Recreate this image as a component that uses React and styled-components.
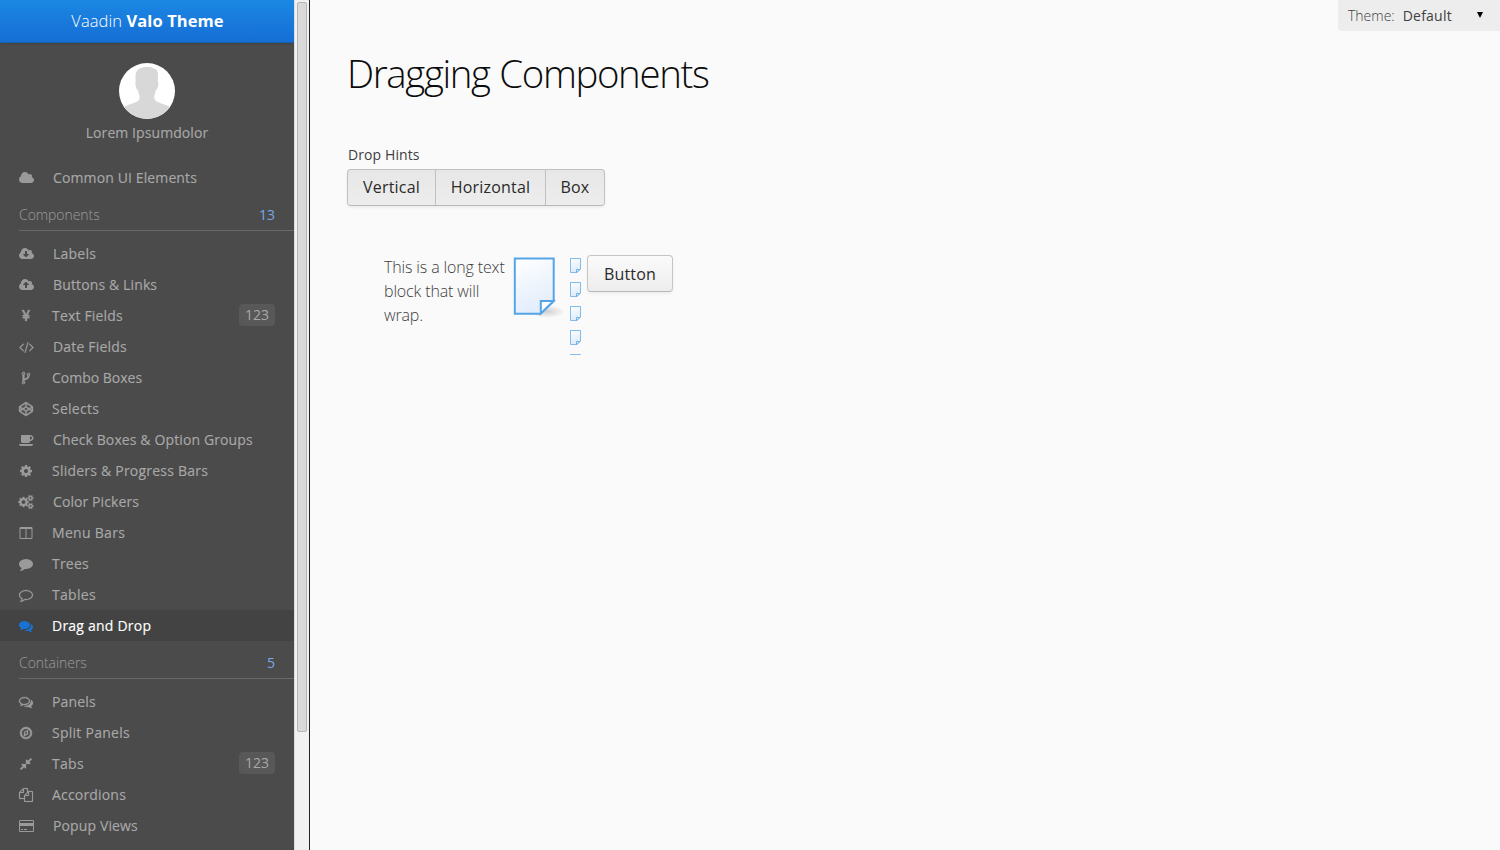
import React from 'react';
import styled, { createGlobalStyle } from 'styled-components';
import { FaCodepen } from 'react-icons/fa';

const GlobalStyle = createGlobalStyle`
  * { box-sizing: border-box; }
  html, body, #root { height: 100%; }
  body {
    margin: 0;
    overflow: hidden;
    background: #fafafa;
    color: #404040;
    font: 400 16px/1.55 "Open Sans", sans-serif;
  }
`;

const cloudBody =
  'm640 224q0 159-112.5 271.5t-271.5 112.5h-1088q-185 0-316.5-131.5t-131.5-316.5q0-130 70-240t188-165q-2-30-2-43 0-212 150-362t362-150q156 0 285.5 87t188.5 231q71-62 166-62 106 0 181 75t75 181q0 76-41 138 130 31 213.5 135.5t83.5 238.5z';
const bubble =
  'q0 174-120 321.5t-326 233-450 85.5q-70 0-145-8-198 175-460 242-49 14-114 22-17 2-30.5-9t-17.5-29v-1q-3-4-.5-12t2-10 4.5-9.5l6-9 7-8.5 8-9q7-8 31-34.5t34.5-38 31-39.5 32.5-51 27-59 26-76q-157-89-247.5-220t-90.5-281q0-130 71-248.5t191-204.5 286-136.5 348-50.5q244 0 450 85.5t326 233 120 321.5z';
const smallGear =
  'v140q0 16-149 31-12 27-30 52 51 113 51 138 0 4-4 7-122 71-124 71-8 0-46-47t-52-68q-20 2-30 2t-30-2q-14 21-52 68t-46 47q-2 0-124-71-4-3-4-7 0-25 51-138-18-25-30-52-149-15-149-31v-140q0-16 149-31 13-29 30-52-51-113-51-138 0-4 4-7 4-2 35-20t59-34 30-16q8 0 46 46.5t52 67.5q20-2 30-2t30 2q51-71 92-112l6-2q4 0 124 70 4 3 4 7 0 25-51 138 17 23 30 52 149 15 149 31z';
const backBubble =
  'q10 24 20.5 44t25 38.5 22.5 29 26 29.5 23 25q1 1 4 4.5t4.5 5 4 5 3.5 5.5l2.5 5 2 6 .5 6.5-1 6.5q-3 14-13 22t-22 7q-50-7-86-16-154-40-278-128-90 16-176 16-271 0-472-132 58 4 88 4 161 0 309-45t264-129q125-92 192-212t67-254q0-77-23-152 129 71 204 178t75 230q0 120-71 224.5t-195 176.5z';
const frontBubble =
  'q0 139-94 257t-256.5 186.5-353.5 68.5q-86 0-176-16-124 88-278 128-36 9-86 16h-3q-11 0-20.5-8t-11.5-21q-1-3-1-6.5t.5-6.5 2-6l2.5-5 3.5-5.5 4-5 4.5-5 4-4.5q5-6 23-25t26-29.5 22.5-29 25-38.5 20.5-44q-124-72-195-177t-71-224q0-139 94-257t256.5-186.5 353.5-68.5 353.5 68.5 256.5 186.5 94 257z';

/* w is the width in px, where 128 path units make one px; x is the left edge of
   the drawing; bold thickens the outline of thin glyphs. */
const glyphs = {
  cloud: { w: 15, x: 64, d: 'M1984 1152q0 159-112.5 271.5t-271.5 112.5h-1088q-185 0-316.5-131.5t-131.5-316.5q0-132 71-241.5t187-163.5q-2-28-2-43 0-212 150-362t362-150q158 0 286.5 88t187.5 230q70-62 166-62 106 0 181 75t75 181q0 75-41 138 129 30 213 134.5t84 239.5z' },
  download: { w: 15, x: 64, d: 'M1344 928q0-14-9-23t-23-9h-224v-352q0-13-9.5-22.5t-22.5-9.5h-192q-13 0-22.5 9.5t-9.5 22.5v352h-224q-13 0-22.5 9.5t-9.5 22.5q0 14 9 23l352 352q9 9 23 9t23-9l351-351q10-12 10-24z' + cloudBody },
  upload: { w: 15, x: 64, d: 'M1344 864q0-14-9-23l-352-352q-9-9-23-9t-23 9l-351 351q-10 12-10 24 0 14 9 23t23 9h224v352q0 13 9.5 22.5t22.5 9.5h192q13 0 22.5-9.5t9.5-22.5v-352h224q13 0 22.5-9.5t9.5-22.5zm0 64' + cloudBody },
  yen: { w: 14, x: 0, bold: 50, d: 'M985.5 1536h-172q-13 0-22.5-9t-9.5-23v-330h-288q-13 0-22.5-9t-9.5-23v-103q0-13 9.5-22.5t22.5-9.5h288v-85h-288q-13 0-22.5-9t-9.5-23v-104q0-13 9.5-22.5t22.5-9.5h214l-321-578q-8-16 0-32 10-16 28-16h194q19 0 29 18l215 425q19 38 56 125 10-24 30.5-68t27.5-61l191-420q8-19 29-19h191q17 0 27 16 9 14 1 31l-313 579h215q13 0 22.5 9.5t9.5 22.5v104q0 14-9.5 23t-22.5 9h-290v85h290q13 0 22.5 9.5t9.5 22.5v103q0 14-9.5 23t-22.5 9h-290v330q0 13-9.5 22.5t-22.5 9.5z' },
  code: { w: 15, x: 64, bold: 30, d: 'M681 1399l-50 50q-10 10-23 10t-23-10l-466-466q-10-10-10-23t10-23l466-466q10-10 23-10t23 10l50 50q10 10 10 23t-10 23l-393 393 393 393q10 10 10 23t-10 23zm591-1067l-373 1291q-4 13-15.5 19.5t-23.5 2.5l-62-17q-13-4-19.5-15.5t-2.5-24.5l373-1291q4-13 15.5-19.5t23.5-2.5l62 17q13 4 19.5 15.5t2.5 24.5zm657 651l-466 466q-10 10-23 10t-23-10l-50-50q-10-10-10-23t10-23l393-393-393-393q-10-10-10-23t10-23l50-50q10-10 23-10t23 10l466 466q10 10 10 23t-10 23z' },
  fork: { w: 14, x: 0, bold: 70, d: 'M672 1472q0-40-28-68t-68-28-68 28-28 68 28 68 68 28 68-28 28-68zm0-1152q0-40-28-68t-68-28-68 28-28 68 28 68 68 28 68-28 28-68zm640 128q0-40-28-68t-68-28-68 28-28 68 28 68 68 28 68-28 28-68zm96 0q0 52-26 96.5t-70 69.5q-2 287-226 414-67 38-203 81-128 40-169.5 71t-41.5 100v26q44 25 70 69.5t26 96.5q0 80-56 136t-136 56-136-56-56-136q0-52 26-96.5t70-69.5v-820q-44-25-70-69.5t-26-96.5q0-80 56-136t136-56 136 56 56 136q0 52-26 96.5t-70 69.5v497q54-26 154-57 55-17 87.5-29.5t70.5-31 59-39.5 40.5-51 28-69.5 8.5-91.5q-44-25-70-69.5t-26-96.5q0-80 56-136t136-56 136 56 56 136z' },
  coffee: { w: 15, x: 0, d: 'M1664 640q0-80-56-136t-136-56h-64v384h64q80 0 136-56t56-136zm-1664 768h1792q0 106-75 181t-181 75h-1280q-106 0-181-75t-75-181zm1856-768q0 159-112.5 271.5t-271.5 112.5h-64v32q0 92-66 158t-158 66h-704q-92 0-158-66t-66-158v-736q0-26 19-45t45-19h1152q159 0 271.5 112.5t112.5 271.5z' },
  cog: { w: 14, x: 0, d: 'M1152 896q0-106-75-181t-181-75-181 75-75 181 75 181 181 75 181-75 75-181zm512-109v222q0 12-8 23t-20 13l-185 28q-19 54-39 91 35 50 107 138 10 12 10 25t-9 23q-27 37-99 108t-94 71q-12 0-26-9l-138-108q-44 23-91 38-16 136-29 186-7 28-36 28h-222q-14 0-24.5-8.5t-11.5-21.5l-28-184q-49-16-90-37l-141 107q-10 9-25 9-14 0-25-11-126-114-165-168-7-10-7-23 0-12 8-23 15-21 51-66.5t54-70.5q-27-50-41-99l-183-27q-13-2-21-12.5t-8-23.5v-222q0-12 8-23t19-13l186-28q14-46 39-92-40-57-107-138-10-12-10-24 0-10 9-23 26-36 98.5-107.5t94.5-71.5q13 0 26 10l138 107q44-23 91-38 16-136 29-186 7-28 36-28h222q14 0 24.5 8.5t11.5 21.5l28 184q49 16 90 37l142-107q9-9 24-9 13 0 25 10 129 119 165 170 7 8 7 22 0 12-8 23-15 21-51 66.5t-54 70.5q26 50 41 98l183 28q13 2 21 12.5t8 23.5z' },
  cogs: { w: 15, x: 0, bold: 40, d: 'M832 896q0-106-75-181t-181-75-181 75-75 181 75 181 181 75 181-75 75-181zm768 512q0-52-38-90t-90-38-90 38-38 90q0 53 37.5 90.5t90.5 37.5 90.5-37.5 37.5-90.5zm0-1024q0-52-38-90t-90-38-90 38-38 90q0 53 37.5 90.5t90.5 37.5 90.5-37.5 37.5-90.5zm-384 421v185q0 10-7 19.5t-16 10.5l-155 24q-11 35-32 76 34 48 90 115 7 11 7 20 0 12-7 19-23 30-82.5 89.5t-78.5 59.5q-11 0-21-7l-115-90q-37 19-77 31-11 108-23 155-7 24-30 24h-186q-11 0-20-7.5t-10-17.5l-23-153q-34-10-75-31l-118 89q-7 7-20 7-11 0-21-8-144-133-144-160 0-9 7-19 10-14 41-53t47-61q-23-44-35-82l-152-24q-10-1-17-9.5t-7-19.5v-185q0-10 7-19.5t16-10.5l155-24q11-35 32-76-34-48-90-115-7-11-7-20 0-12 7-20 22-30 82-89t79-59q11 0 21 7l115 90q34-18 77-32 11-108 23-154 7-24 30-24h186q11 0 20 7.5t10 17.5l23 153q34 10 75 31l118-89q8-7 20-7 11 0 21 8 144 133 144 160 0 8-7 19-12 16-42 54t-45 60q23 48 34 82l152 23q10 2 17 10.5t7 19.5zm640 533' + smallGear + 'm0-1024' + smallGear },
  columns: { w: 14, x: 0, d: 'M224 1536h608v-1152h-640v1120q0 13 9.5 22.5t22.5 9.5zm1376-32v-1120h-640v1152h608q13 0 22.5-9.5t9.5-22.5zm128-1216v1216q0 66-47 113t-113 47h-1344q-66 0-113-47t-47-113v-1216q0-66 47-113t113-47h1344q66 0 113 47t47 113z' },
  comment: { w: 14, x: 0, d: 'M1792 896' + bubble },
  commentOutline: { w: 14, x: 0, bold: 30, d: 'M896 384q-204 0-381.5 69.5t-282 187.5-104.5 255q0 112 71.5 213.5t201.5 175.5l87 50-27 96q-24 91-70 172 152-63 275-171l43-38 57 6q69 8 130 8 204 0 381.5-69.5t282-187.5 104.5-255-104.5-255-282-187.5-381.5-69.5zm896 512' + bubble },
  comments: { w: 14, x: 0, d: 'M1408 768' + frontBubble + 'M1526 1425' + backBubble },
  commentsOutline: { w: 14, x: 0, bold: 40, d: 'M704 384q-153 0-286 52t-211.5 141-78.5 191q0 82 53 158t149 132l97 56-35 84q34-20 62-39l44-31 53 10q78 14 153 14 153 0 286-52t211.5-141 78.5-191-78.5-191-211.5-141-286-52zM1408 768' + frontBubble + 'M1526 1425' + backBubble },
  compass: { w: 14, x: 0, bold: 50, d: 'M768 1103l256-128v-311l-256 128v311zm384-591v542l-512 256v-542zm288 384q0-148-73-273t-198-198-273-73-273 73-198 198-73 273 73 273 198 198 273 73 273-73 198-198 73-273zm224 0q0 209-103 385.5t-279.5 279.5-385.5 103-385.5-103-279.5-279.5-103-385.5 103-385.5 279.5-279.5 385.5-103 385.5 103 279.5 279.5 103 385.5z' },
  compress: { w: 14, x: 0, bold: 30, d: 'M896 960v448q0 26-19 45t-45 19-45-19l-144-144-332 332q-10 10-23 10t-23-10l-114-114q-10-10-10-23t10-23l332-332-144-144q-19-19-19-45t19-45 45-19h448q26 0 45 19t19 45zm755-672q0 13-10 23l-332 332 144 144q19 19 19 45t-19 45-45 19h-448q-26 0-45-19t-19-45v-448q0-26 19-45t45-19 45 19l144 144 332-332q10-10 23-10t23 10l114 114q10 10 10 23z' },
  copy: { w: 14, x: 0, bold: 20, d: 'M1696 384q40 0 68 28t28 68v1216q0 40-28 68t-68 28h-960q-40 0-68-28t-28-68v-288h-544q-40 0-68-28t-28-68v-672q0-40 20-88t48-76l408-408q28-28 76-48t88-20h416q40 0 68 28t28 68v328q68-40 128-40h416zm-544 213l-299 299h299v-299zm-640-384l-299 299h299v-299zm196 647l316-316v-416h-384v416q0 40-28 68t-68 28h-416v640h512v-256q0-40 20-88t48-76zm956 804v-1152h-384v416q0 40-28 68t-68 28h-416v640h896z' },
  card: { w: 15, x: 0, d: 'M1760 128q66 0 113 47t47 113v1216q0 66-47 113t-113 47h-1600q-66 0-113-47t-47-113v-1216q0-66 47-113t113-47h1600zm-1600 128q-13 0-22.5 9.5t-9.5 22.5v224h1664v-224q0-13-9.5-22.5t-22.5-9.5h-1600zm1600 1280q13 0 22.5-9.5t9.5-22.5v-608h-1664v608q0 13 9.5 22.5t22.5 9.5h1600zm-1504-128v-128h256v128h-256zm384 0v-128h384v128h-384z' },
};

const Page = styled.div`
  display: flex;
  height: 850px;
  width: 1500px;
`;

const Sidebar = styled.aside`
  display: flex;
  width: 310px;
  height: 100%;
  border-right: 1px solid #232323;
  flex: none;
`;

const MenuColumn = styled.div`
  width: 294px;
  background: #4b4b4b;
  overflow: hidden;
`;

const ScrollTrack = styled.div`
  width: 15px;
  padding: 2px 2px 0 2px;
  background: #f1f1f1;
  border-left: 1px solid #dcdcdc;
`;

const ScrollThumb = styled.div`
  height: 730px;
  width: 10px;
  background: #d9d9d9;
  border: 1px solid #b5b5b5;
  border-radius: 2px;
`;

const Brand = styled.header`
  height: 43px;
  background: linear-gradient(#1b87e3 2%, #166ed5 98%);
  border-bottom: 1px solid #1862b4;
  box-shadow: 0 1px 2px rgba(0, 0, 0, 0.12);
  color: #fff;
  font-size: 16.5px;
  line-height: 41px;
  padding-left: 1px;
  letter-spacing: 0.08px;
  text-align: center;
  font-weight: 300;

  b { font-weight: 700; }
`;

const Profile = styled.div`
  display: flex;
  flex-direction: column;
  align-items: center;
  padding-top: 20px;
  height: 119px;
  color: #a8a8a8;
  font-size: 14px;
  line-height: 27px;
  letter-spacing: 0.08px;
  -webkit-text-stroke: 0.15px currentColor;
`;

const Section = styled.div`
  display: flex;
  justify-content: space-between;
  margin: 6px 0 7px 19px;
  padding-right: 19px;
  height: 32px;
  border-bottom: 1px solid #696969;
  color: #9c9c9c;
  font-weight: 300;
  font-size: 14px;
  line-height: 31px;
  letter-spacing: -0.06px;
`;

const Count = styled.span`
  color: #75aae6;
  font-weight: 400;
`;

const Item = styled.div`
  display: flex;
  align-items: center;
  height: 31px;
  padding: 0 19px;
  font-size: 14px;
  color: ${(p) => (p.$selected ? '#fff' : '#a8a8a8')};
  background: ${(p) => (p.$selected ? '#434343' : 'transparent')};

  svg {
    flex: none;
    margin-right: 19px;
    overflow: visible;
    color: ${(p) => (p.$selected ? '#1a72d2' : '#9a9a9a')};
  }
`;

const ItemLabel = styled.span`
  flex: 1;
  white-space: nowrap;
  letter-spacing: ${(p) => p.$tracking}px;
  -webkit-text-stroke: 0.15px currentColor;
`;

const Badge = styled.span`
  height: 22px;
  padding: 0 6px;
  border-radius: 4px;
  background: #585858;
  line-height: 21px;
  margin-top: -2px;
`;

const Main = styled.main`
  flex: 1;
  padding-left: 37px;
`;

const TopBar = styled.div`
  display: flex;
  justify-content: flex-end;
  height: 31px;
`;

const ThemePicker = styled.div`
  display: flex;
  align-items: center;
  width: 162px;
  padding: 0 15px 0 10px;
  border-radius: 0 0 0 4px;
  background: #ededed;
  font-size: 14px;
  font-weight: 300;
`;

const ThemeValue = styled.span`
  flex: 1;
  margin-left: 8px;
  font-weight: 400;
  letter-spacing: 0.22px;
`;

const Title = styled.h1`
  margin: 16px 0 0;
  color: #0c0c0c;
  font-size: 38.4px;
  font-weight: 300;
  letter-spacing: -1.36px;
  word-spacing: 1px;
  line-height: 52px;
`;

const Caption = styled.div`
  margin: 45px 0 0 1px;
  font-size: 14px;
  line-height: 22px;
  letter-spacing: 0.1px;
`;

const ButtonGroup = styled.div`
  display: inline-flex;
  height: 37px;
  margin-top: 3px;
  border: 1px solid #c0c0c0;
  border-bottom-color: #b8b8b8;
  border-radius: 4px;
  background: linear-gradient(#e7e7e7, #ededed);
  box-shadow: 0 2px 3px rgba(0, 0, 0, 0.05);
`;

const GroupButton = styled.button`
  width: ${(p) => p.$width}px;
  padding: 0 0 1px;
  border: 0;
  border-left: ${(p) => (p.$first ? '0' : '1px solid #c0c0c0')};
  background: none;
  color: #2a2a2a;
  font: 400 16px/34px "Open Sans", sans-serif;
  letter-spacing: 0.18px;
`;

const DragArea = styled.section`
  display: flex;
  align-items: flex-start;
  height: 100px;
  margin: 49px 0 0 37px;
  overflow: hidden;
`;

const LongText = styled.p`
  width: 127px;
  margin: 0;
  font-weight: 300;
  line-height: 24px;
  letter-spacing: -0.14px;
`;

const BigFile = styled.div`
  width: 56px;
  height: 68px;
  svg { display: block; }
`;

const FileList = styled.div`
  display: flex;
  flex-direction: column;
  width: 20px;
  height: 100px;
  overflow: hidden;
  svg { flex: none; display: block; }
`;

const PushButton = styled.button`
  width: 86px;
  height: 37px;
  padding: 1px 0 0;
  border: 1px solid #c5c5c5;
  border-bottom-color: #b8b8b8;
  border-radius: 4px;
  background: linear-gradient(#fafafa, #ededed);
  box-shadow: 0 2px 3px rgba(0, 0, 0, 0.05);
  color: #2a2a2a;
  font: 400 16px/34px "Open Sans", sans-serif;
  letter-spacing: 0.18px;
`;

function Glyph({ name }) {
  if (name === 'codepen') return <FaCodepen size={14} stroke="currentColor" strokeWidth={16} />;
  const { w, x, d, bold = 0 } = glyphs[name];
  return (
    <svg width={w} height={14} viewBox={`${x} 0 ${w * 128} 1792`} fill="currentColor">
      <path d={d} stroke="currentColor" strokeWidth={bold} />
    </svg>
  );
}

function Avatar() {
  return (
    <svg width="56" height="56" viewBox="0 0 56 56">
      <defs>
        <clipPath id="avatarClip"><circle cx="28" cy="28" r="28" /></clipPath>
      </defs>
      <circle cx="28" cy="28" r="28" fill="#fff" />
      <path
        clipPath="url(#avatarClip)"
        fill="#d8d8d8"
        d="M28 4c4 0 5.500.5 6.800 1.600C38 6.300 39.300 9 39 13c-.1 2-.2 4-.1 5.500 1 .6.4 4.500-.4 6.500-.5 1.500-1.200 2-1.700 2.200-.3 2.500-.9 4.300-1.600 5.500 0 2.600.5 4.600 2.500 5.800 3.500 2 8.600 2.800 13.200 5.300V58H5V43.800c4.600-2.500 9.700-3.300 13.300-5.300 2-1.200 2.500-3.300 2.300-5.800-.9-1.300-1.300-3.500-1.600-5.500-1-.4-1.600-1.500-2-3-.5-2-1-5-.3-6-.2-2-.3-4-.1-6C17 6.500 21.500 4 28 4z"
      />
    </svg>
  );
}

function BigFileIcon() {
  return (
    <svg width="56" height="68" viewBox="0 0 56 68">
      <defs>
        <linearGradient id="sheet" x1="0" y1="0" x2="0.3" y2="1">
          <stop offset="0" stopColor="#fff" />
          <stop offset="1" stopColor="#e3edfb" />
        </linearGradient>
        <radialGradient id="shade">
          <stop offset="0" stopColor="#000" stopOpacity="0.17" />
          <stop offset="1" stopColor="#000" stopOpacity="0" />
        </radialGradient>
      </defs>
      <ellipse cx="36" cy="56.5" rx="18" ry="6.5" fill="url(#shade)" />
      <path d="M3.8 3.5H42.7V46L29.5 58.7H3.8z" fill="url(#sheet)" stroke="#55a5e6" strokeWidth="2" />
      <path d="M29.8 58.5V46H42.5z" fill="#fff" stroke="#55a5e6" strokeWidth="2" />
    </svg>
  );
}

function SmallFileIcon() {
  return (
    <svg width="16" height="24" viewBox="0 0 16 24">
      <defs>
        <linearGradient id="smallSheet" x1="0" y1="0" x2="0.3" y2="1">
          <stop offset="0" stopColor="#fff" />
          <stop offset="1" stopColor="#dfeafa" />
        </linearGradient>
      </defs>
      <path d="M3.5 3.5H13.5V14L9.8 17.5H3.5z" fill="url(#smallSheet)" stroke="#83bbea" />
      <path d="M9.5 17.5V14.5H13.2z" fill="#fff" stroke="#6fb0e6" />
    </svg>
  );
}

const components = [
  { icon: 'download', label: 'Labels', tracking: 0.22 },
  { icon: 'upload', label: 'Buttons & Links', tracking: 0.13 },
  { icon: 'yen', label: 'Text Fields', badge: '123', tracking: 0.18 },
  { icon: 'code', label: 'Date Fields', tracking: 0.18 },
  { icon: 'fork', label: 'Combo Boxes', tracking: 0 },
  { icon: 'codepen', label: 'Selects', tracking: 0.25 },
  { icon: 'coffee', label: 'Check Boxes & Option Groups', tracking: 0.12 },
  { icon: 'cog', label: 'Sliders & Progress Bars', tracking: 0.22 },
  { icon: 'cogs', label: 'Color Pickers', tracking: 0.09 },
  { icon: 'columns', label: 'Menu Bars', tracking: 0.3 },
  { icon: 'comment', label: 'Trees', tracking: 0.22 },
  { icon: 'commentOutline', label: 'Tables', tracking: 0.3 },
  { icon: 'comments', label: 'Drag and Drop', tracking: 0.22, selected: true },
];

const containers = [
  { icon: 'commentsOutline', label: 'Panels', tracking: 0.18 },
  { icon: 'compass', label: 'Split Panels', tracking: 0.26 },
  { icon: 'compress', label: 'Tabs', badge: '123', tracking: 0.3 },
  { icon: 'copy', label: 'Accordions', tracking: 0.18 },
  { icon: 'card', label: 'Popup Views', tracking: 0.13 },
];

function MenuItem({ icon, label, badge, tracking, selected }) {
  return (
    <Item $selected={selected}>
      <Glyph name={icon} />
      <ItemLabel $tracking={tracking}>{label}</ItemLabel>
      {badge && <Badge>{badge}</Badge>}
    </Item>
  );
}

const renderItems = (items) => items.map((item) => <MenuItem key={item.label} {...item} />);

export default function App() {
  return (
    <Page>
      <GlobalStyle />
      <Sidebar>
        <MenuColumn>
          <Brand>Vaadin <b>Valo Theme</b></Brand>
          <Profile>
            <Avatar />
            Lorem Ipsumdolor
          </Profile>
          <MenuItem icon="cloud" label="Common UI Elements" tracking={0.12} />
          <Section>Components<Count>13</Count></Section>
          {renderItems(components)}
          <Section>Containers<Count>5</Count></Section>
          {renderItems(containers)}
        </MenuColumn>
        <ScrollTrack><ScrollThumb /></ScrollTrack>
      </Sidebar>
      <Main>
        <TopBar>
          <ThemePicker>
            Theme:<ThemeValue>Default</ThemeValue>
            <svg width="10" height="7" viewBox="0 0 10 7"><path d="M2 0H8L5 6z" fill="#000" /></svg>
          </ThemePicker>
        </TopBar>
        <Title>Dragging Components</Title>
        <Caption>Drop Hints</Caption>
        <ButtonGroup>
          <GroupButton $first $width={87}>Vertical</GroupButton>
          <GroupButton $width={110}>Horizontal</GroupButton>
          <GroupButton $width={59}>Box</GroupButton>
        </ButtonGroup>
        <DragArea>
          <LongText>This is a long text block that will wrap.</LongText>
          <BigFile><BigFileIcon /></BigFile>
          <FileList>
            {[0, 1, 2, 3, 4].map((n) => <SmallFileIcon key={n} />)}
          </FileList>
          <PushButton>Button</PushButton>
        </DragArea>
      </Main>
    </Page>
  );
}
